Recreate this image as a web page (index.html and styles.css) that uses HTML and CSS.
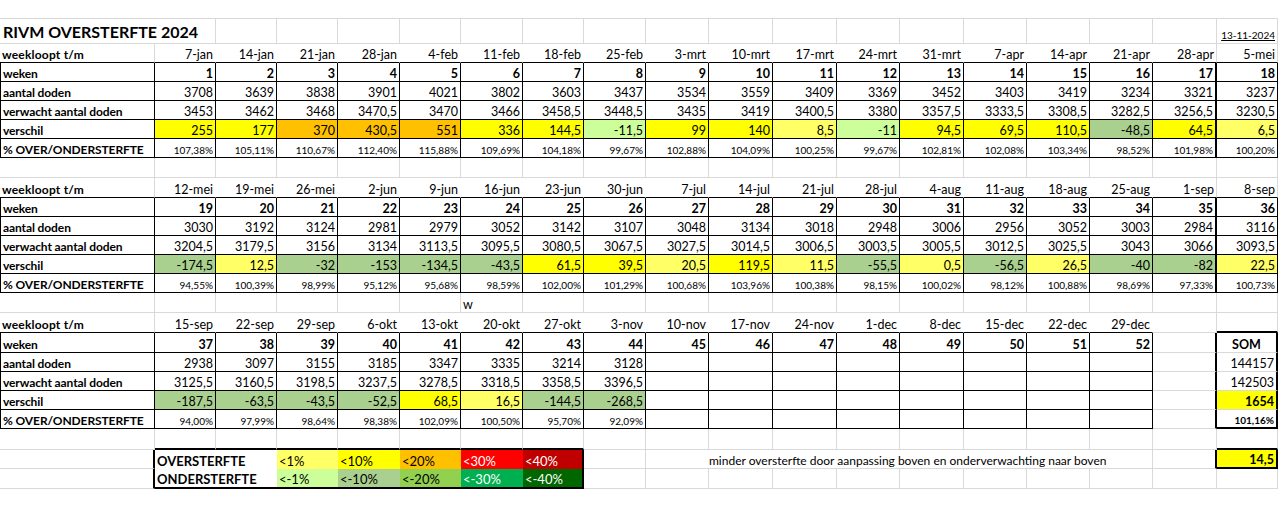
FILE: index.html
```html
<!DOCTYPE html>
<html lang="nl">
<head>
<meta charset="utf-8">
<title>RIVM OVERSTERFTE 2024</title>
<link rel="stylesheet" href="styles.css">
</head>
<body>
<div class="sheet">
  <div class="top"></div>

  <!-- title -->
  <div class="row h25">
    <div class="c title span2">RIVM OVERSTERFTE 2024</div>
    <div class="c"></div><div class="c"></div><div class="c"></div><div class="c"></div>
    <div class="c"></div><div class="c"></div><div class="c"></div><div class="c"></div>
    <div class="c"></div><div class="c"></div><div class="c"></div><div class="c"></div>
    <div class="c"></div><div class="c"></div><div class="c"></div><div class="c"></div>
    <div class="c date">13-11-2024</div>
  </div>

  <!-- block 1 -->
  <div class="row">
    <div class="c L bb">weekloopt t/m</div>
    <div class="c nr bb">7-jan</div><div class="c nr bb">14-jan</div><div class="c nr bb">21-jan</div><div class="c nr bb">28-jan</div>
    <div class="c nr bb">4-feb</div><div class="c nr bb">11-feb</div><div class="c nr bb">18-feb</div><div class="c nr bb">25-feb</div>
    <div class="c nr bb">3-mrt</div><div class="c nr bb">10-mrt</div><div class="c nr bb">17-mrt</div><div class="c nr bb">24-mrt</div>
    <div class="c nr bb">31-mrt</div><div class="c nr bb">7-apr</div><div class="c nr bb">14-apr</div><div class="c nr bb">21-apr</div>
    <div class="c bb">28-apr</div><div class="c bb">5-mei</div>
  </div>
  <div class="row">
    <div class="c k fl">weken</div>
    <div class="c k b">1</div><div class="c k b">2</div><div class="c k b">3</div><div class="c k b">4</div>
    <div class="c k b">5</div><div class="c k b">6</div><div class="c k b">7</div><div class="c k b">8</div>
    <div class="c k b">9</div><div class="c k b">10</div><div class="c k b">11</div><div class="c k b">12</div>
    <div class="c k b">13</div><div class="c k b">14</div><div class="c k b">15</div><div class="c k b">16</div>
    <div class="c k b tr">17</div><div class="c k b">18</div>
  </div>
  <div class="row">
    <div class="c k fl">aantal doden</div>
    <div class="c k">3708</div><div class="c k">3639</div><div class="c k">3838</div><div class="c k">3901</div>
    <div class="c k">4021</div><div class="c k">3802</div><div class="c k">3603</div><div class="c k">3437</div>
    <div class="c k">3534</div><div class="c k">3559</div><div class="c k">3409</div><div class="c k">3369</div>
    <div class="c k">3452</div><div class="c k">3403</div><div class="c k">3419</div><div class="c k">3234</div>
    <div class="c k tr">3321</div><div class="c k">3237</div>
  </div>
  <div class="row">
    <div class="c k fl">verwacht aantal doden</div>
    <div class="c k">3453</div><div class="c k">3462</div><div class="c k">3468</div><div class="c k">3470,5</div>
    <div class="c k">3470</div><div class="c k">3466</div><div class="c k">3458,5</div><div class="c k">3448,5</div>
    <div class="c k">3435</div><div class="c k">3419</div><div class="c k">3400,5</div><div class="c k">3380</div>
    <div class="c k">3357,5</div><div class="c k">3333,5</div><div class="c k">3308,5</div><div class="c k">3282,5</div>
    <div class="c k tr">3256,5</div><div class="c k">3230,5</div>
  </div>
  <div class="row">
    <div class="c k fl">verschil</div>
    <div class="c k y">255</div><div class="c k y">177</div><div class="c k o">370</div><div class="c k o">430,5</div>
    <div class="c k o">551</div><div class="c k y">336</div><div class="c k y">144,5</div><div class="c k lg">-11,5</div>
    <div class="c k y">99</div><div class="c k y">140</div><div class="c k ly">8,5</div><div class="c k lg">-11</div>
    <div class="c k y">94,5</div><div class="c k y">69,5</div><div class="c k y">110,5</div><div class="c k mg">-48,5</div>
    <div class="c k y tr">64,5</div><div class="c k ly">6,5</div>
  </div>
  <div class="row">
    <div class="c k fl">% OVER/ONDERSTERFTE</div>
    <div class="c k p">107,38%</div><div class="c k p">105,11%</div><div class="c k p">110,67%</div><div class="c k p">112,40%</div>
    <div class="c k p">115,88%</div><div class="c k p">109,69%</div><div class="c k p">104,18%</div><div class="c k p">99,67%</div>
    <div class="c k p">102,88%</div><div class="c k p">104,09%</div><div class="c k p">100,25%</div><div class="c k p">99,67%</div>
    <div class="c k p">102,81%</div><div class="c k p">102,08%</div><div class="c k p">103,34%</div><div class="c k p">98,52%</div>
    <div class="c k p tr">101,98%</div><div class="c k p">100,20%</div>
  </div>

  <!-- empty -->
  <div class="row h20">
    <div class="c"></div><div class="c"></div><div class="c"></div><div class="c"></div><div class="c"></div>
    <div class="c"></div><div class="c"></div><div class="c"></div><div class="c"></div><div class="c"></div>
    <div class="c"></div><div class="c"></div><div class="c"></div><div class="c"></div><div class="c"></div>
    <div class="c"></div><div class="c"></div><div class="c"></div><div class="c"></div>
  </div>

  <!-- block 2 -->
  <div class="row h20">
    <div class="c L bb">weekloopt t/m</div>
    <div class="c nr bb">12-mei</div><div class="c nr bb">19-mei</div><div class="c nr bb">26-mei</div><div class="c nr bb">2-jun</div>
    <div class="c nr bb">9-jun</div><div class="c nr bb">16-jun</div><div class="c nr bb">23-jun</div><div class="c nr bb">30-jun</div>
    <div class="c nr bb">7-jul</div><div class="c nr bb">14-jul</div><div class="c nr bb">21-jul</div><div class="c nr bb">28-jul</div>
    <div class="c nr bb">4-aug</div><div class="c nr bb">11-aug</div><div class="c nr bb">18-aug</div><div class="c nr bb">25-aug</div>
    <div class="c bb">1-sep</div><div class="c bb">8-sep</div>
  </div>
  <div class="row">
    <div class="c k fl">weken</div>
    <div class="c k b">19</div><div class="c k b">20</div><div class="c k b">21</div><div class="c k b">22</div>
    <div class="c k b">23</div><div class="c k b">24</div><div class="c k b">25</div><div class="c k b">26</div>
    <div class="c k b">27</div><div class="c k b">28</div><div class="c k b">29</div><div class="c k b">30</div>
    <div class="c k b">31</div><div class="c k b">32</div><div class="c k b">33</div><div class="c k b">34</div>
    <div class="c k b tr">35</div><div class="c k b">36</div>
  </div>
  <div class="row">
    <div class="c k fl">aantal doden</div>
    <div class="c k">3030</div><div class="c k">3192</div><div class="c k">3124</div><div class="c k">2981</div>
    <div class="c k">2979</div><div class="c k">3052</div><div class="c k">3142</div><div class="c k">3107</div>
    <div class="c k">3048</div><div class="c k">3134</div><div class="c k">3018</div><div class="c k">2948</div>
    <div class="c k">3006</div><div class="c k">2956</div><div class="c k">3052</div><div class="c k">3003</div>
    <div class="c k tr">2984</div><div class="c k">3116</div>
  </div>
  <div class="row">
    <div class="c k fl">verwacht aantal doden</div>
    <div class="c k">3204,5</div><div class="c k">3179,5</div><div class="c k">3156</div><div class="c k">3134</div>
    <div class="c k">3113,5</div><div class="c k">3095,5</div><div class="c k">3080,5</div><div class="c k">3067,5</div>
    <div class="c k">3027,5</div><div class="c k">3014,5</div><div class="c k">3006,5</div><div class="c k">3003,5</div>
    <div class="c k">3005,5</div><div class="c k">3012,5</div><div class="c k">3025,5</div><div class="c k">3043</div>
    <div class="c k tr">3066</div><div class="c k">3093,5</div>
  </div>
  <div class="row">
    <div class="c k fl">verschil</div>
    <div class="c k mg">-174,5</div><div class="c k ly">12,5</div><div class="c k mg">-32</div><div class="c k mg">-153</div>
    <div class="c k mg">-134,5</div><div class="c k mg">-43,5</div><div class="c k y">61,5</div><div class="c k y">39,5</div>
    <div class="c k ly">20,5</div><div class="c k y">119,5</div><div class="c k ly">11,5</div><div class="c k mg">-55,5</div>
    <div class="c k ly">0,5</div><div class="c k mg">-56,5</div><div class="c k ly">26,5</div><div class="c k mg">-40</div>
    <div class="c k mg tr">-82</div><div class="c k ly">22,5</div>
  </div>
  <div class="row">
    <div class="c k fl">% OVER/ONDERSTERFTE</div>
    <div class="c k p">94,55%</div><div class="c k p">100,39%</div><div class="c k p">98,99%</div><div class="c k p">95,12%</div>
    <div class="c k p">95,68%</div><div class="c k p">98,59%</div><div class="c k p">102,00%</div><div class="c k p">101,29%</div>
    <div class="c k p">100,68%</div><div class="c k p">103,96%</div><div class="c k p">100,38%</div><div class="c k p">98,15%</div>
    <div class="c k p">100,02%</div><div class="c k p">98,12%</div><div class="c k p">100,88%</div><div class="c k p">98,69%</div>
    <div class="c k p tr">97,33%</div><div class="c k p">100,73%</div>
  </div>

  <!-- empty with w -->
  <div class="row h20">
    <div class="c"></div><div class="c"></div><div class="c"></div><div class="c"></div><div class="c"></div>
    <div class="c"></div><div class="c note">w</div><div class="c"></div><div class="c"></div><div class="c"></div>
    <div class="c"></div><div class="c"></div><div class="c"></div><div class="c"></div><div class="c"></div>
    <div class="c"></div><div class="c"></div><div class="c"></div><div class="c"></div>
  </div>

  <!-- block 3 -->
  <div class="row h20">
    <div class="c L bb">weekloopt t/m</div>
    <div class="c nr bb">15-sep</div><div class="c nr bb">22-sep</div><div class="c nr bb">29-sep</div><div class="c nr bb">6-okt</div>
    <div class="c nr bb">13-okt</div><div class="c nr bb">20-okt</div><div class="c nr bb">27-okt</div><div class="c nr bb">3-nov</div>
    <div class="c nr bb">10-nov</div><div class="c nr bb">17-nov</div><div class="c nr bb">24-nov</div><div class="c nr bb">1-dec</div>
    <div class="c nr bb">8-dec</div><div class="c nr bb">15-dec</div><div class="c nr bb">22-dec</div><div class="c nr bb">29-dec</div>
    <div class="c"></div><div class="c tb"></div>
  </div>
  <div class="row h20">
    <div class="c k fl">weken</div>
    <div class="c k b">37</div><div class="c k b">38</div><div class="c k b">39</div><div class="c k b">40</div>
    <div class="c k b">41</div><div class="c k b">42</div><div class="c k b">43</div><div class="c k b">44</div>
    <div class="c k b">45</div><div class="c k b">46</div><div class="c k b">47</div><div class="c k b">48</div>
    <div class="c k b">49</div><div class="c k b">50</div><div class="c k b">51</div><div class="c k b">52</div>
    <div class="c tr"></div><div class="c tr b ctr">SOM</div>
  </div>
  <div class="row">
    <div class="c k fl">aantal doden</div>
    <div class="c k">2938</div><div class="c k">3097</div><div class="c k">3155</div><div class="c k">3185</div>
    <div class="c k">3347</div><div class="c k">3335</div><div class="c k">3214</div><div class="c k">3128</div>
    <div class="c k"></div><div class="c k"></div><div class="c k"></div><div class="c k"></div>
    <div class="c k"></div><div class="c k"></div><div class="c k"></div><div class="c k"></div>
    <div class="c tr"></div><div class="c tr">144157</div>
  </div>
  <div class="row">
    <div class="c k fl">verwacht aantal doden</div>
    <div class="c k">3125,5</div><div class="c k">3160,5</div><div class="c k">3198,5</div><div class="c k">3237,5</div>
    <div class="c k">3278,5</div><div class="c k">3318,5</div><div class="c k">3358,5</div><div class="c k">3396,5</div>
    <div class="c k"></div><div class="c k"></div><div class="c k"></div><div class="c k"></div>
    <div class="c k"></div><div class="c k"></div><div class="c k"></div><div class="c k"></div>
    <div class="c tr"></div><div class="c tr">142503</div>
  </div>
  <div class="row">
    <div class="c k fl">verschil</div>
    <div class="c k mg">-187,5</div><div class="c k mg">-63,5</div><div class="c k mg">-43,5</div><div class="c k mg">-52,5</div>
    <div class="c k y">68,5</div><div class="c k ly">16,5</div><div class="c k mg">-144,5</div><div class="c k mg">-268,5</div>
    <div class="c k"></div><div class="c k"></div><div class="c k"></div><div class="c k"></div>
    <div class="c k"></div><div class="c k"></div><div class="c k"></div><div class="c k"></div>
    <div class="c tr"></div><div class="c tr y b">1654</div>
  </div>
  <div class="row">
    <div class="c k fl">% OVER/ONDERSTERFTE</div>
    <div class="c k p">94,00%</div><div class="c k p">97,99%</div><div class="c k p">98,64%</div><div class="c k p">98,38%</div>
    <div class="c k p">102,09%</div><div class="c k p">100,50%</div><div class="c k p">95,70%</div><div class="c k p">92,09%</div>
    <div class="c k"></div><div class="c k"></div><div class="c k"></div><div class="c k"></div>
    <div class="c k"></div><div class="c k"></div><div class="c k"></div><div class="c k"></div>
    <div class="c tr"></div><div class="c tr tb b p">101,16%</div>
  </div>

  <!-- empty before legend -->
  <div class="row h21">
    <div class="c"></div>
    <div class="c tb"></div><div class="c tb"></div><div class="c tb"></div><div class="c tb"></div>
    <div class="c tb"></div><div class="c tb"></div><div class="c tb"></div>
    <div class="c"></div><div class="c"></div><div class="c"></div><div class="c"></div><div class="c"></div>
    <div class="c"></div><div class="c"></div><div class="c"></div><div class="c"></div><div class="c"></div>
    <div class="c tb"></div>
  </div>

  <!-- legend -->
  <div class="row">
    <div class="c tr"></div>
    <div class="c lgc L span2">OVERSTERFTE</div>
    <div class="c lgc ly">&lt;1%</div>
    <div class="c lgc y">&lt;10%</div>
    <div class="c lgc o">&lt;20%</div>
    <div class="c lgc r3 wt">&lt;30%</div>
    <div class="c lgc r4 wt tr">&lt;40%</div>
    <div class="c"></div>
    <div class="c span8 msg">minder oversterfte door aanpassing boven en onderverwachting naar boven</div>
    <div class="c tr"></div>
    <div class="c tr tb y b">14,5</div>
  </div>
  <div class="row h20">
    <div class="c tr"></div>
    <div class="c lgc L span2 tb">ONDERSTERFTE</div>
    <div class="c lgc lg tb">&lt;-1%</div>
    <div class="c lgc mg tb">&lt;-10%</div>
    <div class="c lgc g2 tb">&lt;-20%</div>
    <div class="c lgc g3 wt tb">&lt;-30%</div>
    <div class="c lgc g4 wt tr tb">&lt;-40%</div>
    <div class="c"></div><div class="c"></div><div class="c"></div><div class="c"></div><div class="c"></div>
    <div class="c"></div><div class="c"></div><div class="c"></div><div class="c"></div><div class="c"></div>
    <div class="c"></div>
  </div>
</div>
</body>
</html>
```

FILE: styles.css
```css
* { box-sizing: border-box; }

body {
  margin: 0;
  background: #ffffff;
  font-family: Lato, "Liberation Sans", sans-serif;
  color: #000000;
}

.sheet {
  width: 1278px;
}

.top {
  height: 19px;
  border-bottom: 1px solid #d9d9d9;
}

.row {
  display: grid;
  grid-template-columns: 155px 61px 61px 61px 62px 61px 62px 61px 62px 63px 64px 64px 63px 64px 63px 63px 63px 64px 61px;
  height: 19px;
}

.h20 { height: 20px; }
.h21 { height: 21px; }
.h25 { height: 25px; }

.c {
  display: flex;
  align-items: flex-end;
  justify-content: flex-end;
  min-width: 0;
  padding: 0 2px;
  border-right: 1px solid #d9d9d9;
  border-bottom: 1px solid #d9d9d9;
  font-size: 12.5px;
  line-height: 15px;
  white-space: nowrap;
}

.span2 { grid-column: span 2; }
.span8 { grid-column: span 8; }

.title {
  justify-content: flex-start;
  padding-left: 3px;
  padding-bottom: 2px;
  font-size: 16px;
  font-weight: 700;
  line-height: 19px;
}

.date {
  font-size: 10px;
  line-height: 12px;
  padding-bottom: 2px;
  text-decoration: underline;
}

.L {
  justify-content: flex-start;
  font-weight: 700;
  font-size: 12px;
  letter-spacing: 0.2px;
}

.nr { border-right-color: transparent; }
.bb { border-bottom-color: #000000; }
.k { border-right-color: #000000; border-bottom-color: #000000; }

.fl {
  border-left: 1px solid #000000;
  justify-content: flex-start;
  padding-left: 2px;
  font-weight: 700;
  font-size: 12px;
  letter-spacing: -0.1px;
}

.b { font-weight: 700; }
.p { font-size: 10px; line-height: 14px; }
.ctr { justify-content: center; }

.note {
  justify-content: flex-start;
}

.msg {
  justify-content: flex-start;
  padding-left: 63px;
  font-size: 12px;
}

.lgc {
  border-right: none;
  border-bottom: none;
  justify-content: flex-start;
  font-size: 13px;
  letter-spacing: 0;
}

.tr { border-right: 2px solid #000000; }
.tb { border-bottom: 2px solid #000000; }

.y  { background: #ffff00; }
.ly { background: #ffff66; }
.o  { background: #ffc000; }
.r3 { background: #ff0000; }
.r4 { background: #c00000; }
.lg { background: #ccff99; }
.mg { background: #a9d08e; }
.g2 { background: #92d050; }
.g3 { background: #00b050; }
.g4 { background: #006600; }
.wt { color: #ffffff; }
```
